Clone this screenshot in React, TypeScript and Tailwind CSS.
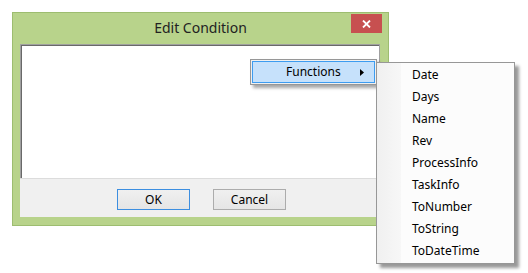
const items = ["Date", "Days", "Name", "Rev", "ProcessInfo", "TaskInfo", "ToNumber", "ToString", "ToDateTime"];

export default function App() {
  return (
    <div className="relative w-[528px] h-[273px] overflow-hidden bg-white pt-[12px] pl-[12px] font-['Noto_Sans',sans-serif] text-[12px] text-black">
      {/* dialog window */}
      <div className="w-[377px] h-[214px] border border-[#9dbd70] bg-[#b8d38b] flex flex-col">
        <div className="relative h-[31px] flex items-center justify-center">
          <span className="text-[14px] text-[#222] pb-[2px]">Edit Condition</span>
          <div className="absolute right-[6px] top-[1px] w-[31px] h-[19px] bg-[#c75050] flex items-center justify-center">
            <svg width="9" height="8" viewBox="0 0 9 8">
              <path d="M1 0.5 L8 7.5 M8 0.5 L1 7.5" stroke="white" strokeWidth="1.8" />
            </svg>
          </div>
        </div>
        <div className="ml-[7px] w-[360px] h-[173px] flex flex-col bg-[#f0f0f0]">
          <div className="h-[134px] border-t border-l border-r border-[#a0a0a0]">
            <div className="h-full border-t border-l border-[#696969] bg-white" />
          </div>
          <div className="flex-1 border-t border-[#dcdcdc] flex justify-center gap-[23px] pt-[10px] pl-[3px]">
            <button className="w-[73px] h-[21px] border border-[#3c8ee0] bg-gradient-to-b from-[#f0f0f0] to-[#e5e5e5] text-[12px] leading-none">OK</button>
            <button className="w-[73px] h-[21px] border border-[#acacac] bg-gradient-to-b from-[#f0f0f0] to-[#e5e5e5] text-[12px] leading-none">Cancel</button>
          </div>
        </div>
      </div>

      {/* context menu */}
      <div className="absolute left-[250px] top-[59px] w-[127px] border border-[#979797] bg-[#f0f0f0] p-[1px] shadow-[3px_3px_3px_rgba(0,0,0,0.35)]">
        <div className="h-[22px] border border-[#3d9cf0] bg-[#c6e1fb] flex items-center pl-[33px] relative">
          <span>Functions</span>
          <svg className="absolute left-[107px] top-[7px]" width="4" height="7" viewBox="0 0 4 7">
            <path d="M0 0 L4 3.5 L0 7 Z" fill="black" />
          </svg>
        </div>
      </div>

      {/* submenu */}
      <div className="absolute left-[376px] top-[62px] w-[139px] border border-[#979797] bg-[#fcfcfc] py-[1px] shadow-[4px_4px_3px_rgba(0,0,0,0.4)]">
        <div className="absolute left-0 top-0 bottom-0 w-[24px] bg-gradient-to-r from-[#f0f0f0] to-[#f7f7f7]" />
        <div className="relative flex flex-col">
          {items.map((it) => (
            <div key={it} className="h-[22px] flex items-center pl-[35px]">
              {it}
            </div>
          ))}
        </div>
      </div>
    </div>
  );
}
